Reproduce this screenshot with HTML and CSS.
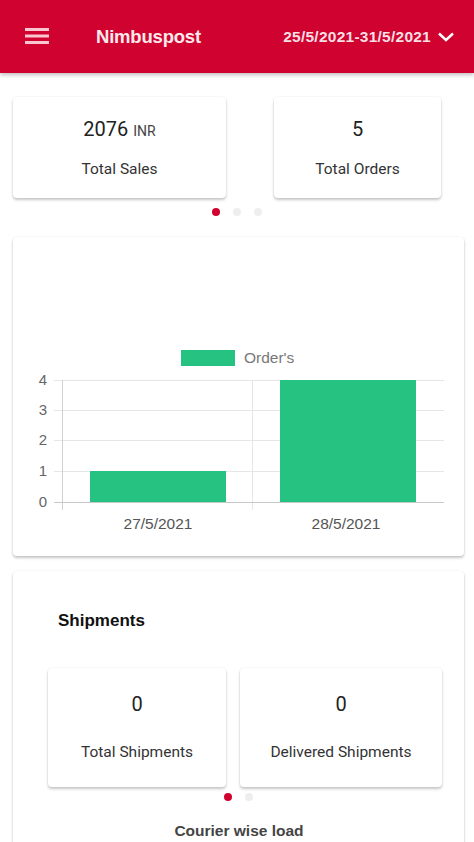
FILE: index.html
```html
<!DOCTYPE html>
<html>
<head>
<meta charset="utf-8">
<link rel="stylesheet" href="styles.css">
</head>
<body>
<header class="topbar">
  <div class="menu-btn">
    <svg width="24" height="18" viewBox="0 0 24 18"><rect x="0" y="1" width="24" height="3" fill="#f7c6d0"/><rect x="0" y="7.5" width="24" height="3" fill="#f7c6d0"/><rect x="0" y="14" width="24" height="3" fill="#f7c6d0"/></svg>
  </div>
  <div class="brand">Nimbuspost</div>
  <div class="range">25/5/2021-31/5/2021
    <svg width="18" height="12" viewBox="0 0 18 12"><path d="M2 2.5 L9 9 L16 2.5" fill="none" stroke="#fff" stroke-width="2.4"/></svg>
  </div>
</header>

<main class="page">
  <section class="stats-row">
    <div class="card stat stat-sales">
      <div class="value">2076 <span class="unit">INR</span></div>
      <div class="label">Total Sales</div>
    </div>
    <div class="card stat stat-orders">
      <div class="value">5</div>
      <div class="label">Total Orders</div>
    </div>
  </section>
  <div class="dots">
    <span class="dot active"></span><span class="dot"></span><span class="dot"></span>
  </div>

  <section class="card chart-card">
    <svg class="chart" width="451" height="319" viewBox="0 0 451 319">
      <rect x="168" y="113" width="54" height="16" fill="#26c281"/>
      <text x="231" y="126" class="lg">Order's</text>
      <g stroke="#e6e6e6" stroke-width="1">
        <line x1="41" y1="143.5" x2="431" y2="143.5"/>
        <line x1="41" y1="173.5" x2="431" y2="173.5"/>
        <line x1="41" y1="203.5" x2="431" y2="203.5"/>
        <line x1="41" y1="234.5" x2="431" y2="234.5"/>
        <line x1="239.5" y1="143" x2="239.5" y2="273"/>
      </g>
      <line x1="49.5" y1="143" x2="49.5" y2="273" stroke="#d0d0d0"/>
      <line x1="41" y1="265.5" x2="431" y2="265.5" stroke="#c8c8c8"/>
      <rect x="77" y="234" width="136" height="31" fill="#26c281"/>
      <rect x="267" y="143" width="136" height="122" fill="#26c281"/>
      <g class="yl" text-anchor="end">
        <text x="34" y="148">4</text>
        <text x="34" y="178">3</text>
        <text x="34" y="208">2</text>
        <text x="34" y="239">1</text>
        <text x="34" y="270">0</text>
      </g>
      <g class="xl" text-anchor="middle">
        <text x="145" y="292">27/5/2021</text>
        <text x="333" y="292">28/5/2021</text>
      </g>
    </svg>
  </section>

  <section class="card ship-card">
    <h2 class="ship-title">Shipments</h2>
    <div class="ship-row">
      <div class="card stat ship-total">
        <div class="value">0</div>
        <div class="label">Total Shipments</div>
      </div>
      <div class="card stat ship-delivered">
        <div class="value">0</div>
        <div class="label">Delivered Shipments</div>
      </div>
    </div>
    <div class="dots dots-ship">
      <span class="dot active"></span><span class="dot"></span>
    </div>
    <div class="courier">Courier wise load</div>
  </section>
</main>
</body>
</html>
```

FILE: styles.css
```css
* { box-sizing: border-box; }
html, body { margin: 0; padding: 0; background: #fff; }
body {
  font-family: Roboto, "Liberation Sans", Arial, sans-serif;
  color: #222;
  width: 474px;
  height: 842px;
  overflow: hidden;
}
.topbar {
  height: 73px;
  background: #d0022f;
  display: flex;
  align-items: center;
  color: #fff;
  box-shadow: 0 2px 4px rgba(0,0,0,0.25);
  position: relative;
  z-index: 2;
}
.menu-btn {
  width: 24px;
  height: 18px;
  margin-left: 25px;
  margin-top: -1px;
  display: flex;
}
.brand {
  margin-left: 47px;
  font-family: "Liberation Sans", Arial, sans-serif;
  font-weight: bold;
  font-size: 18.5px;
  letter-spacing: -0.2px;
  color: #fbe9ec;
}
.range {
  margin-left: auto;
  margin-right: 19px;
  font-family: "Liberation Sans", Arial, sans-serif;
  font-weight: bold;
  font-size: 15.5px;
  letter-spacing: 0.25px;
  color: #f8dfe4;
  display: flex;
  align-items: center;
  gap: 6px;
}
.page {
  padding: 24px 10px 0 13px;
}
.card {
  background: #fff;
  border-radius: 4px;
  box-shadow: 0 2px 3px rgba(0,0,0,0.22), 0 0 2px rgba(0,0,0,0.08);
}
.stats-row {
  display: flex;
  gap: 48px;
}
.stat {
  height: 101px;
  display: flex;
  flex-direction: column;
  align-items: center;
  padding-top: 20px;
}
.stat-sales { width: 213px; }
.stat-orders { width: 167px; }
.value {
  font-size: 20px;
  color: #222;
  line-height: 24px;
  height: 24px;
}
.unit { font-size: 14px; color: #444; }
.label {
  margin-top: 19px;
  font-size: 15.5px;
  color: #333;
}
.dots {
  display: flex;
  justify-content: center;
  gap: 13px;
  margin-top: 10px;
  padding-right: 3px;
}
.dot {
  width: 8px;
  height: 8px;
  border-radius: 50%;
  background: #eeeeee;
}
.dot.active { background: #d0022f; }
.chart-card {
  margin-top: 21px;
  height: 319px;
  width: 451px;
}
.chart { display: block; }
.chart .lg { font-family: "Liberation Sans", Arial, sans-serif; font-size: 15.5px; fill: #777; }
.chart .yl text { font-family: "Liberation Sans", Arial, sans-serif; font-size: 15px; fill: #666; }
.chart .xl text { font-family: "Liberation Sans", Arial, sans-serif; font-size: 15.5px; fill: #555; }
.ship-card {
  margin-top: 15px;
  width: 451px;
  height: 300px;
  padding: 40px 22px 0 35px;
}
.ship-title {
  margin: 0 0 0 10px;
  font-family: "Liberation Sans", Arial, sans-serif;
  font-weight: bold;
  font-size: 17px;
  color: #111;
  line-height: 20px;
}
.ship-row {
  display: flex;
  gap: 14px;
  margin-top: 37px;
}
.ship-row .stat { height: 119px; padding-top: 24px; }
.ship-total { width: 178px; }
.ship-delivered { width: 202px; }
.ship-row .label { margin-top: 27px; font-size: 15.5px; }
.dots-ship { margin-top: 6px; gap: 13px; padding-right: 13px; }
.courier {
  margin-top: 21px;
  text-align: center;
  font-family: "Liberation Sans", Arial, sans-serif;
  font-weight: bold;
  font-size: 15.5px;
  color: #444;
  padding-right: 12px;
}
```
